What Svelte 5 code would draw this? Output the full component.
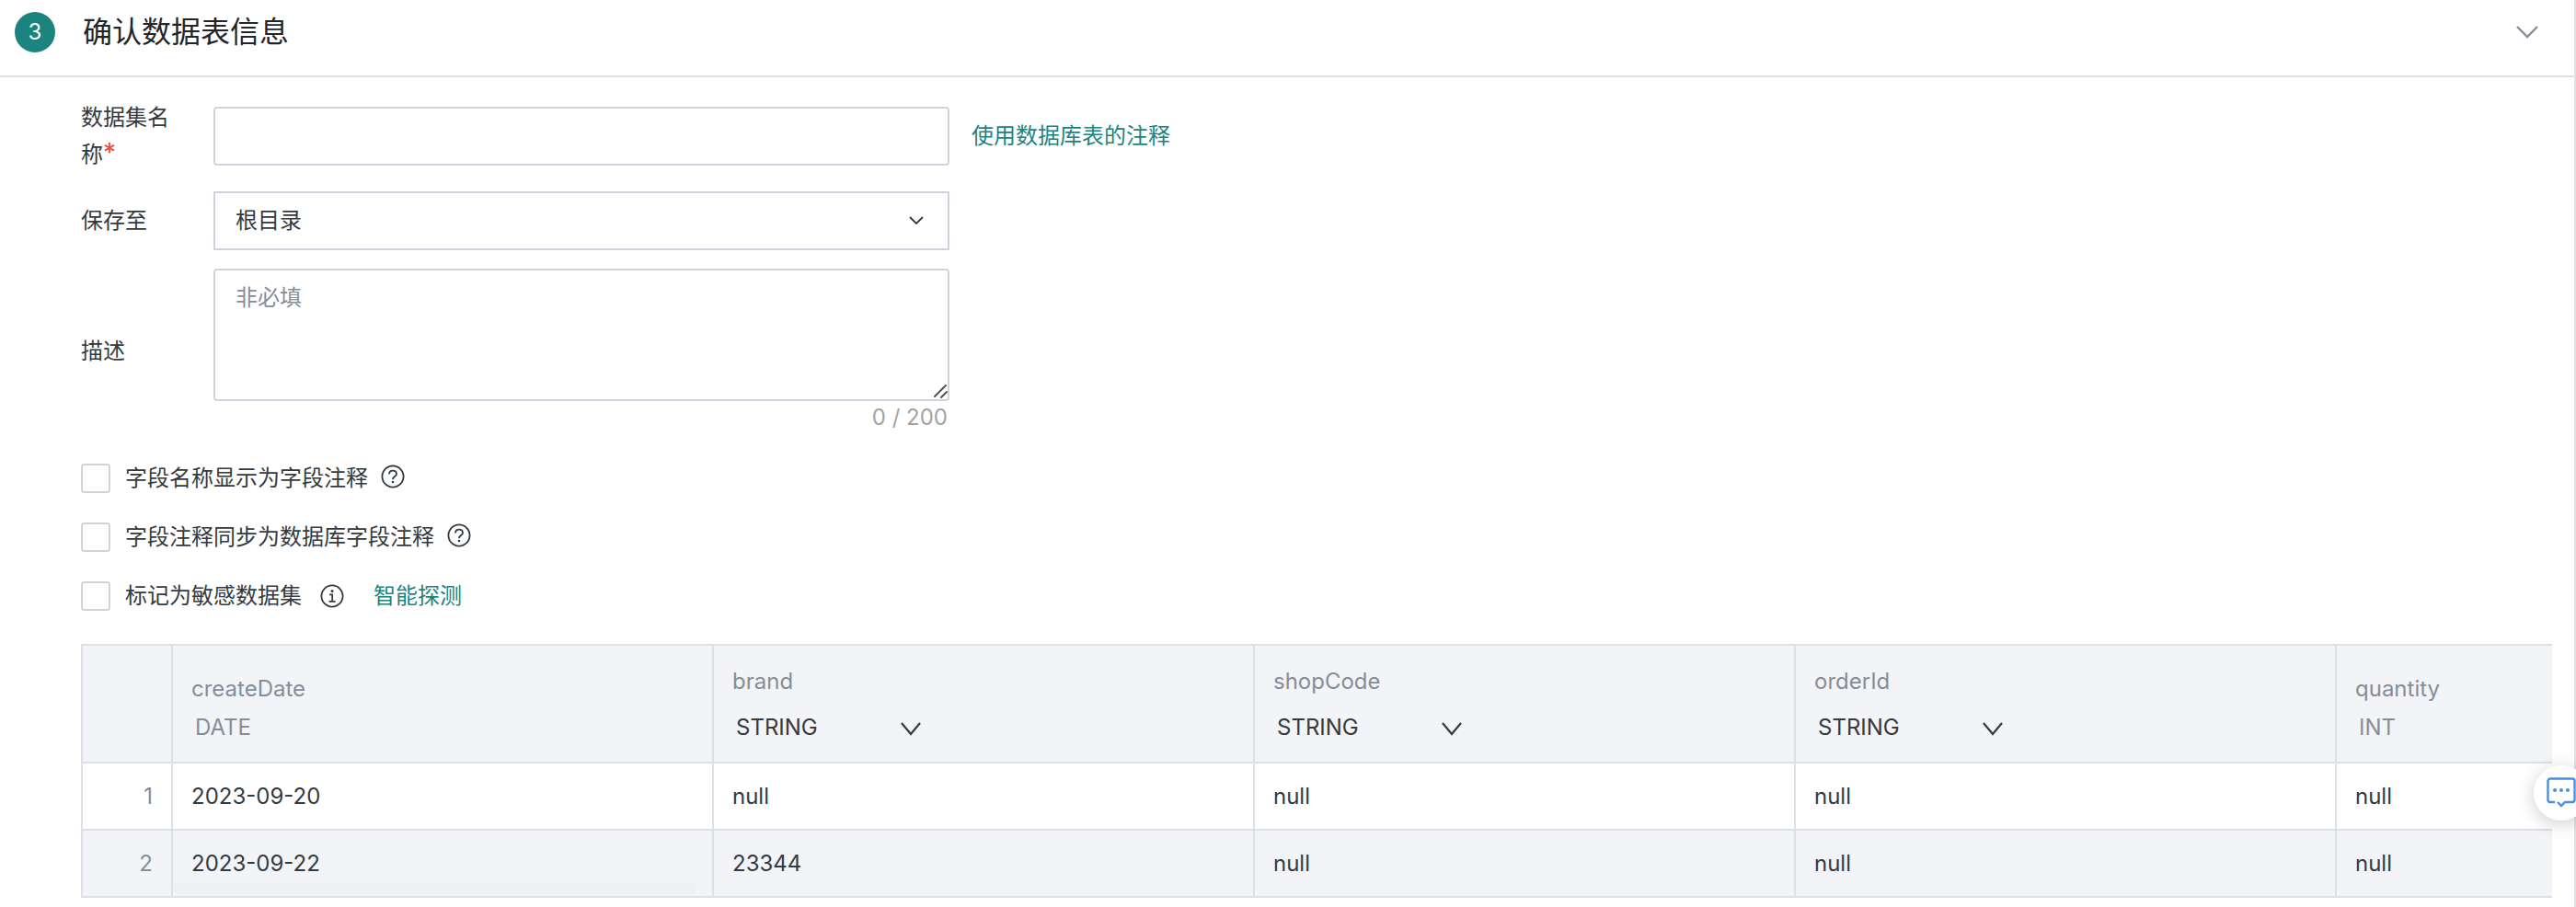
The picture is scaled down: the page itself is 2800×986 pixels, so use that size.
<script>
  const directories = ["根目录"];
  const maxLength = 200;
  const types = ["STRING", "INT", "DATE"];

  let name = $state("");
  let directory = $state("根目录");
  let description = $state("");
  let expanded = $state(true);

  let options = $state([
    { id: "show-comment", label: "字段名称显示为字段注释", icon: "help", checked: false },
    { id: "sync-comment", label: "字段注释同步为数据库字段注释", icon: "help", checked: false },
    { id: "sensitive", label: "标记为敏感数据集", icon: "info", action: "智能探测", checked: false },
  ]);

  let columns = $state([
    { name: "createDate", type: "DATE", editable: false },
    { name: "brand", type: "STRING", editable: true },
    { name: "shopCode", type: "STRING", editable: true },
    { name: "orderId", type: "STRING", editable: true },
    { name: "quantity", type: "INT", editable: false },
  ]);

  const rows = [
    ["2023-09-20", "null", "null", "null", "null"],
    ["2023-09-22", "23344", "null", "null", "null"],
  ];
</script>

<main class="page">
  <header class="step-header">
    <span class="step-number">3</span>
    <h2>确认数据表信息</h2>
    <button
      class="toggle"
      aria-label="展开或收起"
      aria-expanded={expanded}
      onclick={() => (expanded = !expanded)}
    >
      <svg width="26" height="16" viewBox="0 0 26 16">
        <path d="M2 2l11 11L24 2" fill="none" stroke="#878d96" stroke-width="2.4" />
      </svg>
    </button>
  </header>

  {#if expanded}
    <section class="step-body">
      <div class="form-row">
        <label for="dataset-name">数据集名称<span class="required">*</span></label>
        <div class="field">
          <input id="dataset-name" class="control" type="text" bind:value={name} />
        </div>
        <a class="link" href="#comment">使用数据库表的注释</a>
      </div>

      <div class="form-row">
        <label for="directory">保存至</label>
        <div class="field">
          <select id="directory" class="control" bind:value={directory}>
            {#each directories as item}
              <option>{item}</option>
            {/each}
          </select>
          <svg class="select-arrow" width="16" height="10" viewBox="0 0 16 10">
            <path d="M1 1l7 7 7-7" fill="none" stroke="#343a40" stroke-width="1.8" />
          </svg>
        </div>
      </div>

      <div class="form-row">
        <label for="description">描述</label>
        <div class="field">
          <textarea
            id="description"
            class="control"
            placeholder="非必填"
            maxlength={maxLength}
            bind:value={description}
          ></textarea>
          <svg class="grip" width="16" height="16" viewBox="0 0 16 16">
            <path d="M2 14L14 2M9 15l6-6" stroke="#555" stroke-width="2" stroke-linecap="round" />
          </svg>
          <div class="counter">{description.length} / {maxLength}</div>
        </div>
      </div>

      <div class="options">
        {#each options as option (option.id)}
          <div class="option" class:spaced={option.icon === "info"}>
            <input id={option.id} type="checkbox" bind:checked={option.checked} />
            <label for={option.id}>{option.label}</label>
            <svg class="hint" width="26" height="26" viewBox="0 0 26 26" fill="none" stroke="#343a40" stroke-width="1.8">
              <circle cx="13" cy="13" r="11.6" />
              {#if option.icon === "help"}
                <path d="M9 10.6c0-2.4 1.7-4 4-4s4 1.5 4 3.6c0 3-4 3-4 5.4v.6" />
                <circle cx="13" cy="19" r="1.3" fill="#343a40" stroke="none" />
              {:else}
                <path d="M10 11.4h3.2v7.2M9.6 18.8h7" />
                <circle cx="13" cy="7.4" r="1.5" fill="#343a40" stroke="none" />
              {/if}
            </svg>
            {#if option.action}
              <a class="link" href="#detect">{option.action}</a>
            {/if}
          </div>
        {/each}
      </div>

      <div class="preview">
        <div class="table-scroll">
          <table>
            <thead>
              <tr>
                <th class="index" aria-label="序号"></th>
                {#each columns as column}
                  <th>
                    <div class="column-name">{column.name}</div>
                    {#if column.editable}
                      <div class="type-select">
                        <select aria-label={column.name} bind:value={column.type}>
                          {#each types as type}
                            <option>{type}</option>
                          {/each}
                        </select>
                        <svg width="22" height="16" viewBox="0 0 22 16">
                          <path d="M1 1l10 12L21 1" fill="none" stroke="#343a40" stroke-width="2.2" />
                        </svg>
                      </div>
                    {:else}
                      <div class="column-type">{column.type}</div>
                    {/if}
                  </th>
                {/each}
              </tr>
            </thead>
            <tbody>
              {#each rows as row, i}
                <tr>
                  <td class="index">{i + 1}</td>
                  {#each row as cell}
                    <td>{cell}</td>
                  {/each}
                </tr>
              {/each}
            </tbody>
          </table>
        </div>
        <div class="scroll-thumb"></div>
      </div>
    </section>
  {/if}

  <button class="feedback" aria-label="反馈">
    <svg width="32" height="34" viewBox="0 0 32 34" fill="none" stroke="#4a90e2" stroke-width="2.4">
      <path d="M9 27H4a2.5 2.5 0 0 1-2.5-2.5V4A2.5 2.5 0 0 1 4 1.5h24A2.5 2.5 0 0 1 30.5 4v20.5A2.5 2.5 0 0 1 28 27h-8l-4 4-4-4" />
      <g fill="#4a90e2" stroke="none">
        <circle cx="9" cy="14" r="2" />
        <circle cx="16" cy="14" r="2" />
        <circle cx="23" cy="14" r="2" />
      </g>
    </svg>
  </button>
</main>

<style>
  :global(body) {
    background: #fff;
  }

  .page {
    box-sizing: border-box;
    min-height: 100vh;
    border-right: 2px solid #dee2e6;
    color: #343a40;
    font-family: Inter, "Noto Sans CJK SC", sans-serif;
    font-size: 24px;
    line-height: 36px;
  }

  button,
  input,
  select,
  textarea {
    font: inherit;
    color: inherit;
  }

  .step-header {
    display: flex;
    align-items: center;
    height: 70px;
    padding: 0 38px 12px 16px;
    border-bottom: 2px solid #dde1e6;
  }

  .step-number {
    display: flex;
    align-items: center;
    justify-content: center;
    width: 44px;
    height: 44px;
    border-radius: 50%;
    background: #1b847f;
    color: #fff;
  }

  h2 {
    flex: 1;
    margin: 0 0 0 30px;
    color: #212529;
    font-size: 32px;
    font-weight: 400;
    line-height: 48px;
  }

  .toggle {
    display: flex;
    padding: 0;
    border: none;
    background: none;
    cursor: pointer;
  }

  .step-body {
    padding: 24px 24px 10px 88px;
  }

  .form-row {
    display: flex;
    align-items: center;
    margin-bottom: 20px;
  }

  .form-row > label {
    box-sizing: border-box;
    width: 144px;
    padding-right: 40px;
    line-height: 40px;
  }

  .required {
    color: #f04a43;
    font-size: 28px;
    line-height: 36px;
  }

  .field {
    position: relative;
    width: 800px;
  }

  .control {
    display: block;
    box-sizing: border-box;
    width: 100%;
    height: 64px;
    margin: 0;
    padding: 0 22px;
    border: 2px solid #ced4de;
    border-radius: 4px;
    background: #fff;
    outline: none;
  }

  .control:focus {
    border-color: #1b847f;
  }

  select.control {
    appearance: none;
    border-radius: 0;
  }

  textarea.control {
    height: 144px;
    padding: 12px 22px;
    resize: none;
  }

  textarea::placeholder {
    color: #878d96;
    opacity: 1;
  }

  .select-arrow {
    position: absolute;
    top: 27px;
    right: 28px;
    pointer-events: none;
  }

  .grip {
    position: absolute;
    top: 125px;
    right: 2px;
    pointer-events: none;
  }

  .counter {
    padding-right: 2px;
    color: #a3a3a3;
    text-align: right;
  }

  .link {
    color: #1b847f;
    text-decoration: none;
  }

  .form-row .link {
    margin-left: 24px;
  }

  .options {
    display: flex;
    flex-direction: column;
    gap: 28px;
    margin: 30px 0 34px;
  }

  .option {
    display: flex;
    align-items: center;
  }

  .option input {
    appearance: none;
    box-sizing: border-box;
    width: 32px;
    height: 32px;
    margin: 0 16px 0 0;
    border: 2px solid #ced4de;
    border-radius: 4px;
    background: #fff;
  }

  .option input:checked {
    border-color: #1b847f;
    background: #1b847f;
  }

  .hint {
    margin: 0 0 4px 14px;
  }

  .spaced .hint {
    margin: 0 32px 0 20px;
  }

  .preview {
    position: relative;
  }

  .table-scroll {
    overflow: hidden;
  }

  table {
    width: 3040px;
    border-collapse: separate;
    border-spacing: 0;
    border-top: 2px solid #dde1e6;
    border-left: 2px solid #dde1e6;
    table-layout: fixed;
  }

  th,
  td {
    box-sizing: border-box;
    width: 588px;
    padding: 0 20px;
    border-right: 2px solid #dde1e6;
    border-bottom: 2px solid #dde1e6;
    font-weight: 400;
    text-align: left;
  }

  th {
    height: 128px;
    padding-bottom: 16px;
    background: #f2f4f8;
    vertical-align: bottom;
  }

  td {
    height: 73px;
  }

  tbody tr:nth-child(even) {
    background: #f2f4f8;
  }

  .index {
    width: 98px;
    color: #878d96;
    text-align: right;
  }

  .column-name,
  .column-type {
    color: #878d96;
    line-height: 42px;
  }

  .column-type {
    padding-left: 4px;
  }

  .type-select {
    position: relative;
    width: 210px;
    height: 42px;
    margin-top: 8px;
  }

  .type-select select {
    appearance: none;
    width: 100%;
    height: 42px;
    padding: 0 4px;
    border: none;
    background: none;
  }

  .type-select svg {
    position: absolute;
    top: 15px;
    right: 5px;
    pointer-events: none;
  }

  .scroll-thumb {
    position: absolute;
    bottom: 4px;
    left: 100px;
    width: 568px;
    height: 12px;
    border-radius: 6px;
    background: #eff0f4;
  }

  .feedback {
    position: fixed;
    right: -14px;
    bottom: 94px;
    display: flex;
    align-items: center;
    justify-content: center;
    width: 60px;
    height: 60px;
    padding: 0;
    border: none;
    border-radius: 50%;
    background: #fff;
    box-shadow: 0 4px 20px rgba(0, 0, 0, 0.2);
    cursor: pointer;
  }
</style>
